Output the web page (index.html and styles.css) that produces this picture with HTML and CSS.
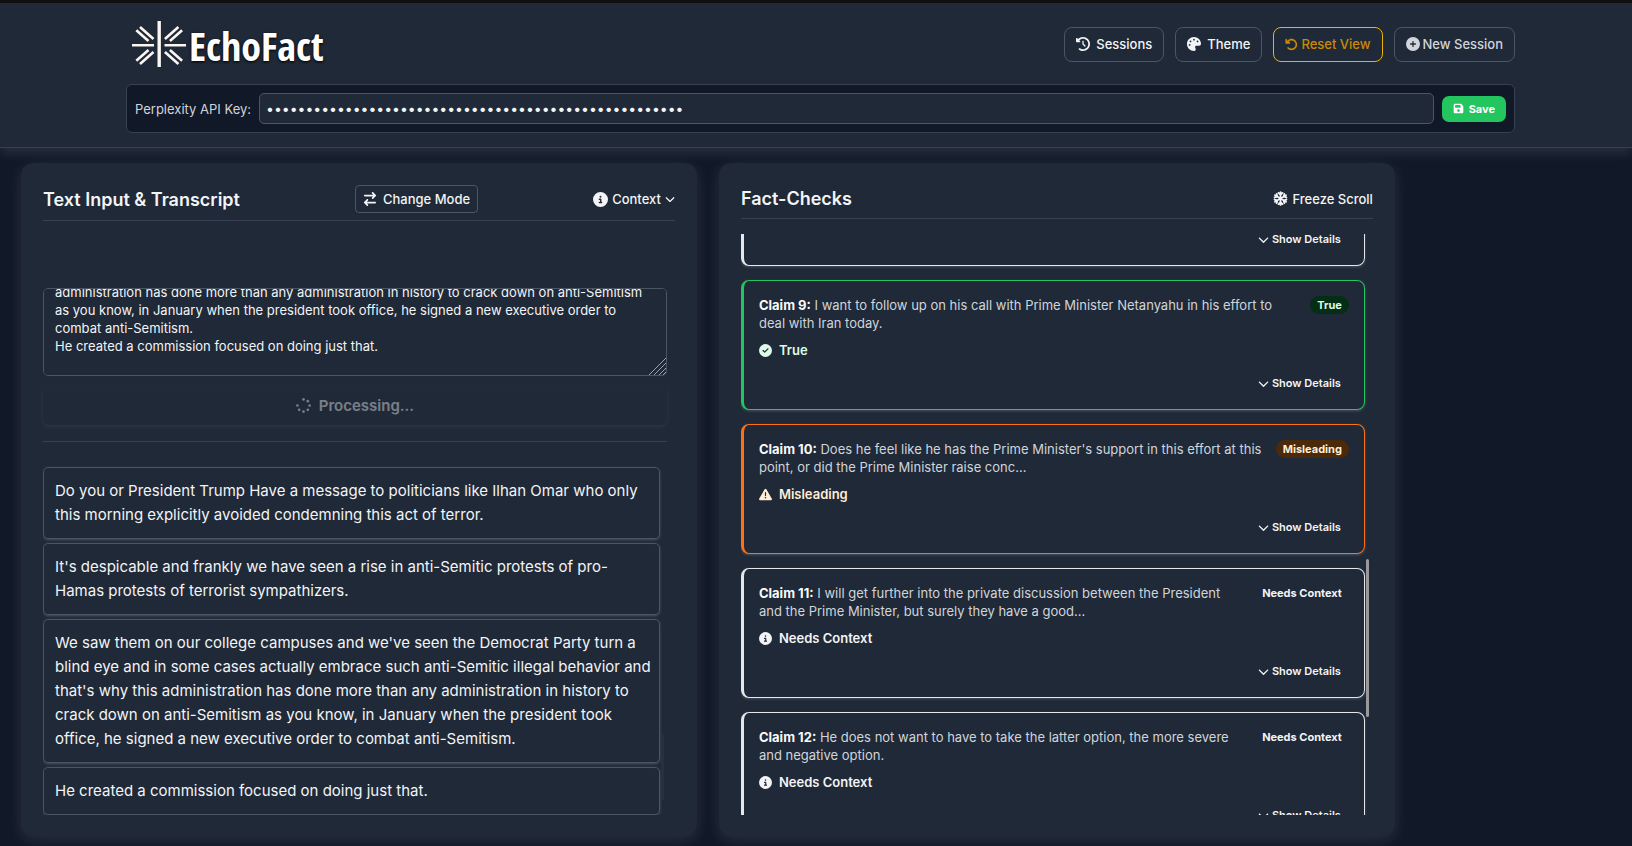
FILE: index.html
```
<!DOCTYPE html>
<html lang="en">
<head>
  <meta charset="UTF-8">
  <meta name="viewport" content="width=device-width, initial-scale=1.0">
  <title>EchoFact</title>
  <link rel="stylesheet" href="styles.css">
</head>
<body>
  <!-- Icon set -->
  <svg class="sprite" aria-hidden="true">
    <symbol id="i-history" viewBox="0 0 512 512"><path d="M75 75L41 41C25.9 25.9 0 36.6 0 57.9V168c0 13.3 10.7 24 24 24H134.1c21.4 0 32.1-25.9 17-41l-30.8-30.8C155 85.5 203 64 256 64c106 0 192 86 192 192s-86 192-192 192c-40.8 0-78.6-12.7-109.7-34.4c-14.5-10.1-34.4-6.6-44.6 7.9s-6.6 34.4 7.9 44.6C151.2 495 201.7 512 256 512c141.4 0 256-114.6 256-256S397.4 0 256 0C185.3 0 121.3 28.7 75 75zm181 53c-13.3 0-24 10.7-24 24V256c0 6.4 2.5 12.5 7 17l72 72c9.4 9.4 24.6 9.4 33.9 0s9.4-24.6 0-33.9l-65-65V152c0-13.3-10.7-24-24-24z"/></symbol>
    <symbol id="i-palette" viewBox="0 0 512 512"><path d="M512 256c0 .9 0 1.8 0 2.7c-.4 36.5-33.6 61.3-70.1 61.3H344c-26.5 0-48 21.5-48 48c0 3.4 .4 6.7 1 9.9c2.1 10.2 6.5 20 10.8 29.9c6.1 13.8 12.1 27.5 12.1 42c0 31.8-21.6 60.7-53.4 62c-3.5 .1-7 .2-10.6 .2C114.6 512 0 397.4 0 256S114.6 0 256 0S512 114.6 512 256zM128 288a32 32 0 1 0 -64 0 32 32 0 1 0 64 0zm0-96a32 32 0 1 0 0-64 32 32 0 1 0 0 64zM288 96a32 32 0 1 0 -64 0 32 32 0 1 0 64 0zm96 96a32 32 0 1 0 0-64 32 32 0 1 0 0 64z"/></symbol>
    <symbol id="i-undo" viewBox="0 0 512 512"><path d="M125.7 160H176c17.7 0 32 14.3 32 32s-14.3 32-32 32H48c-17.7 0-32-14.3-32-32V64c0-17.7 14.3-32 32-32s32 14.3 32 32v51.2L97.6 97.6c87.5-87.5 229.3-87.5 316.8 0s87.5 229.3 0 316.8s-229.3 87.5-316.8 0c-12.5-12.5-12.5-32.8 0-45.3s32.8-12.5 45.3 0c62.5 62.5 163.8 62.5 226.3 0s62.5-163.8 0-226.3s-163.8-62.5-226.3 0L125.7 160z"/></symbol>
    <symbol id="i-plus" viewBox="0 0 512 512"><path d="M256 512A256 256 0 1 0 256 0a256 256 0 1 0 0 512zM232 344V280H168c-13.3 0-24-10.7-24-24s10.7-24 24-24h64V168c0-13.3 10.7-24 24-24s24 10.7 24 24v64h64c13.3 0 24 10.7 24 24s-10.7 24-24 24H280v64c0 13.3-10.7 24-24 24s-24-10.7-24-24z"/></symbol>
    <symbol id="i-save" viewBox="0 0 448 512"><path d="M64 32C28.7 32 0 60.7 0 96V416c0 35.3 28.7 64 64 64H384c35.3 0 64-28.7 64-64V173.3c0-17-6.7-33.3-18.7-45.3L352 50.7C340 38.7 323.7 32 306.7 32H64zm0 96c0-17.7 14.3-32 32-32H288c17.7 0 32 14.3 32 32v64c0 17.7-14.3 32-32 32H96c-17.7 0-32-14.3-32-32V128zM224 288a64 64 0 1 1 0 128 64 64 0 1 1 0-128z"/></symbol>
    <symbol id="i-swap" viewBox="0 0 448 512"><path d="M438.6 150.6c12.5-12.5 12.5-32.8 0-45.3l-96-96c-12.5-12.5-32.8-12.5-45.3 0s-12.5 32.8 0 45.3L338.7 96 32 96C14.3 96 0 110.3 0 128s14.3 32 32 32l306.7 0-41.4 41.4c-12.5 12.5-12.5 32.8 0 45.3s32.8 12.5 45.3 0l96-96zm-333.3 352c12.5 12.5 32.8 12.5 45.3 0s12.5-32.8 0-45.3L109.3 416 416 416c17.7 0 32-14.3 32-32s-14.3-32-32-32l-306.7 0 41.4-41.4c12.5-12.5 12.5-32.8 0-45.3s-32.8-12.5-45.3 0l-96 96c-12.5 12.5-12.5 32.8 0 45.3l96 96z"/></symbol>
    <symbol id="i-info" viewBox="0 0 512 512"><path d="M256 512A256 256 0 1 0 256 0a256 256 0 1 0 0 512zM216 336h24V272H216c-13.3 0-24-10.7-24-24s10.7-24 24-24h48c13.3 0 24 10.7 24 24v88h8c13.3 0 24 10.7 24 24s-10.7 24-24 24H216c-13.3 0-24-10.7-24-24s10.7-24 24-24zm40-208a32 32 0 1 1 0 64 32 32 0 1 1 0-64z"/></symbol>
    <symbol id="i-down" viewBox="0 0 512 512"><path d="M233.4 406.6c12.5 12.5 32.8 12.5 45.3 0l192-192c12.5-12.5 12.5-32.8 0-45.3s-32.8-12.5-45.3 0L256 338.7 86.6 169.4c-12.5-12.5-32.8-12.5-45.3 0s-12.5 32.8 0 45.3l192 192z"/></symbol>
    <symbol id="i-check" viewBox="0 0 512 512"><path d="M256 512A256 256 0 1 0 256 0a256 256 0 1 0 0 512zM369 209L241 337c-9.4 9.4-24.6 9.4-33.9 0l-64-64c-9.4-9.4-9.4-24.6 0-33.9s24.6-9.4 33.9 0l47 47L335 175c9.4-9.4 24.6-9.4 33.9 0s9.4 24.6 0 33.9z"/></symbol>
    <symbol id="i-warning" viewBox="0 0 512 512"><path d="M256 32c14.2 0 27.3 7.5 34.5 19.8l216 368c7.3 12.4 7.3 27.7 .2 40.1S486.3 480 472 480H40c-14.3 0-27.6-7.7-34.7-20.1s-7-27.8 .2-40.1l216-368C228.7 39.5 241.8 32 256 32zm0 128c-13.3 0-24 10.7-24 24V296c0 13.3 10.7 24 24 24s24-10.7 24-24V184c0-13.3-10.7-24-24-24zm32 224a32 32 0 1 0 -64 0 32 32 0 1 0 64 0z"/></symbol>
    <symbol id="i-spinner" viewBox="0 0 512 512"><circle cx="256" cy="48" r="46"/><circle cx="403" cy="109" r="46"/><circle cx="464" cy="256" r="46"/><circle cx="403" cy="403" r="46"/><circle cx="256" cy="464" r="46"/><circle cx="109" cy="403" r="46"/><circle cx="48" cy="256" r="46"/></symbol>
    <symbol id="i-snow" viewBox="0 0 16 16"><g fill="none" stroke="currentColor" stroke-width="2" stroke-linecap="round" stroke-linejoin="round"><path id="arm" d="M8 8V1.200M5.800 2L8 4l2.200-2"/><use href="#arm" transform="rotate(60 8 8)"/><use href="#arm" transform="rotate(120 8 8)"/><use href="#arm" transform="rotate(180 8 8)"/><use href="#arm" transform="rotate(240 8 8)"/><use href="#arm" transform="rotate(300 8 8)"/></g></symbol>
  </svg>

  <header class="topbar">
    <div class="topbar-row">
      <a href="#" class="brand" aria-label="EchoFact">
        <svg class="brand-mark" viewBox="0 0 54 46">
          <path d="M27.200 0v46" stroke-width="3.400"/>
          <path d="M0 24.300h22M32.500 24.300h21.500"/>
          <path d="M4.300 9.200L16.500 20M8 6L21.500 18"/>
          <path d="M50.100 9.200L37.900 20M46.400 6L32.900 18"/>
          <path d="M4.300 39.800L16.500 29M8 43L21.500 31"/>
          <path d="M50.100 39.800L37.900 29M46.400 43L32.900 31"/>
        </svg>
        <span class="brand-name">EchoFact</span>
      </a>
      <nav class="actions">
        <button class="btn"><svg class="icon"><use href="#i-history"/></svg>Sessions</button>
        <button class="btn"><svg class="icon"><use href="#i-palette"/></svg>Theme</button>
        <button class="btn tight reset"><svg class="icon"><use href="#i-undo"/></svg>Reset View</button>
        <button class="btn tight muted"><svg class="icon"><use href="#i-plus"/></svg>New Session</button>
      </nav>
    </div>
    <form class="api">
      <label for="api-key">Perplexity API Key:</label>
      <input id="api-key" type="password" autocomplete="off" value="12345678901234567890123456789012345678901234567890123">
      <button type="button" class="save"><svg class="icon"><use href="#i-save"/></svg>Save</button>
    </form>
  </header>

  <main>
    <section class="panel">
      <div class="panel-head">
        <h2>Text Input &amp; Transcript</h2>
        <button class="mode"><svg class="icon"><use href="#i-swap"/></svg>Change Mode</button>
        <button class="link"><svg class="icon big"><use href="#i-info"/></svg>Context<svg class="icon chev"><use href="#i-down"/></svg></button>
      </div>
      <div class="input-area">
        <div class="textbox">
          <textarea id="text-input" aria-label="Text input">Do you or President Trump Have a message to politicians like Ilhan Omar who only this morning explicitly avoided condemning this act of terror.
It's despicable and frankly we have seen a rise in anti-Semitic protests of pro-Hamas protests of terrorist sympathizers.
We saw them on our college campuses and we've seen the Democrat Party turn a blind eye and in some cases actually embrace such anti-Semitic illegal behavior and that's why this administration has done more than any administration in history to crack down on anti-Semitism as you know, in January when the president took office, he signed a new executive order to combat anti-Semitism.
He created a commission focused on doing just that.</textarea>
          <svg class="grip" viewBox="0 0 18 18"><path d="M1 18L18 1M6 18L18 6M11 18l7-7M15 18l3-3"/></svg>
        </div>
        <button class="process" disabled><svg class="icon"><use href="#i-spinner"/></svg>Processing...</button>
      </div>
      <div class="scroller">
        <div class="transcript">
          <p>Do you or President Trump Have a message to politicians like Ilhan Omar who only this morning explicitly avoided condemning this act of terror.</p>
          <p>It's despicable and frankly we have seen a rise in anti-Semitic protests of pro-Hamas protests of terrorist sympathizers.</p>
          <p>We saw them on our college campuses and we've seen the Democrat Party turn a blind eye and in some cases actually embrace such anti-Semitic illegal behavior and that's why this administration has done more than any administration in history to crack down on anti-Semitism as you know, in January when the president took office, he signed a new executive order to combat anti-Semitism.</p>
          <p>He created a commission focused on doing just that.</p>
        </div>
        <span class="thumb faint"></span>
      </div>
    </section>

    <section class="panel">
      <div class="panel-head low">
        <h2>Fact-Checks</h2>
        <button class="link"><svg class="icon big"><use href="#i-snow"/></svg>Freeze Scroll</button>
      </div>
      <div class="scroller checks">
        <div class="claims" id="claims">
          <article class="claim context">
            <button class="details"><svg class="icon"><use href="#i-down"/></svg>Show Details</button>
          </article>
          <article class="claim true">
            <div class="claim-top">
              <p><strong>Claim 9:</strong> I want to follow up on his call with Prime Minister Netanyahu in his effort to deal with Iran today.</p>
              <span class="badge">True</span>
            </div>
            <div class="verdict"><svg class="icon"><use href="#i-check"/></svg>True</div>
            <button class="details"><svg class="icon"><use href="#i-down"/></svg>Show Details</button>
          </article>
          <article class="claim misleading">
            <div class="claim-top">
              <p><strong>Claim 10:</strong> Does he feel like he has the Prime Minister's support in this effort at this point, or did the Prime Minister raise conc...</p>
              <span class="badge">Misleading</span>
            </div>
            <div class="verdict"><svg class="icon"><use href="#i-warning"/></svg>Misleading</div>
            <button class="details"><svg class="icon"><use href="#i-down"/></svg>Show Details</button>
          </article>
          <article class="claim context">
            <div class="claim-top">
              <p><strong>Claim 11:</strong> I will get further into the private discussion between the President and the Prime Minister, but surely they have a good...</p>
              <span class="badge">Needs Context</span>
            </div>
            <div class="verdict"><svg class="icon"><use href="#i-info"/></svg>Needs Context</div>
            <button class="details"><svg class="icon"><use href="#i-down"/></svg>Show Details</button>
          </article>
          <article class="claim context">
            <div class="claim-top">
              <p><strong>Claim 12:</strong> He does not want to have to take the latter option, the more severe and negative option.</p>
              <span class="badge">Needs Context</span>
            </div>
            <div class="verdict"><svg class="icon"><use href="#i-info"/></svg>Needs Context</div>
            <button class="details"><svg class="icon"><use href="#i-down"/></svg>Show Details</button>
          </article>
        </div>
        <span class="thumb"></span>
      </div>
    </section>
  </main>

<script>
  const box = document.getElementById('text-input');
  box.scrollTop = box.scrollHeight;
  document.getElementById('claims').scrollTop = 98;
</script>
</body>
</html>
```
FILE: styles.css
```
* { margin:0; padding:0; box-sizing:border-box; }
body { height:100vh; display:flex; flex-direction:column; overflow:hidden; font-family:'Inter', sans-serif; font-size:14px; background:#111827; color:#f3f4f6; }
button, input, textarea { font-family:inherit; color:inherit; }
button { background:transparent; border:none; cursor:pointer; display:inline-flex; align-items:center; justify-content:center; white-space:nowrap; }
.sprite { display:none; }
.icon { width:14px; height:14px; fill:currentColor; flex:none; }
.icon.big { width:15px; height:15px; }

/* Top bar */
.topbar { background:#1f2937; border-top:3px solid #0f0f0f; border-bottom:1px solid #374151; padding:14px 117px 14px 126px; box-shadow:0 4px 12px rgba(255,255,255,0.12); }
.topbar-row { display:flex; justify-content:space-between; align-items:center; height:54px; margin-bottom:13px; }
.brand { display:flex; align-items:center; gap:3px; padding-left:6px; color:#fff; text-decoration:none; }
.brand-mark { width:54px; height:46px; fill:none; stroke:#fbf6f1; stroke-width:2.6; }
.brand-name { padding-top:3px; font-family:'Open Sans Condensed', 'Open Sans', sans-serif; font-size:40px; font-weight:700; line-height:46px; text-shadow:0 1px 3px #000; }
.actions { display:flex; gap:11px; }
.btn { height:35px; padding:0 11px; gap:6px; border:1px solid #4b5563; border-radius:8px; font-size:13px; font-weight:500; }
.btn.tight { gap:3px; }
.btn.reset { border-color:#eab308; color:#ca8a04; }
.btn.reset .icon { width:13px; height:13px; }
.btn.muted { color:#d1d5db; }
.api { display:flex; align-items:center; gap:8px; padding:8px; background:#111827; border:1px solid #374151; border-radius:6px; }
.api label { color:#d1d5db; font-size:13px; }
.api input { flex:1; min-width:0; height:31px; padding:0 6px; background:#1f2937; border:1px solid #4b5563; border-radius:5px; font-size:14px; }
.save { height:26px; padding:0 11px; gap:5px; background:#22c55e; color:#fff; border-radius:7px; font-size:11px; font-weight:700; }
.save .icon { width:11px; height:11px; }

/* Panels */
main { flex:1; min-height:0; display:grid; grid-template-columns:7fr 7fr 2fr; grid-template-rows:minmax(0,1fr); gap:22px; padding:15px 22px 10px 21px; }
.panel { display:flex; flex-direction:column; min-width:0; padding:22px 22px 21px; background:#1f2937; border-radius:12px; box-shadow:0 4px 15px rgba(255,255,255,0.1); }
.panel-head { display:flex; justify-content:space-between; align-items:center; padding-bottom:7px; border-bottom:1px solid #374151; }
.panel-head.low { padding:1px 0 7px; }
h2 { font-size:18px; font-weight:600; line-height:24px; padding-top:1px; }
.mode { height:28px; padding:0 7px; gap:6px; border:1px solid #4b5563; border-radius:4px; font-size:13px; font-weight:500; }
.link { gap:4px; font-size:13px; font-weight:500; }
.link .chev { width:10px; height:10px; }

.input-area { margin:67px 8px 0 0; padding-bottom:16px; border-bottom:1px solid #374151; }
.textbox { position:relative; }
textarea { display:block; width:100%; height:88px; padding:8px 11px 20px; background:#1f2937; border:1px solid #4b5563; border-radius:5px; font-size:13px; line-height:18px; resize:none; overflow:auto; scrollbar-width:none; }
.grip { position:absolute; right:1px; bottom:1px; width:18px; height:18px; fill:none; stroke:#9ca3af; stroke-width:1; }
.process { width:100%; height:40px; margin-top:9px; gap:8px; border-radius:6px; color:#e5e7eb; opacity:0.45; font-size:15px; font-weight:600; box-shadow:0 2px 4px rgba(255,255,255,0.15); cursor:default; }
.process .icon { width:15px; height:15px; }

.scroller { position:relative; flex:1; min-height:0; }
.thumb { position:absolute; width:3px; height:158px; top:325px; right:4px; border-radius:2px; background:#999; }
.thumb.faint { top:292px; right:11px; height:66px; background:#263040; }
.transcript { height:100%; overflow:auto; scrollbar-width:none; padding:25px 15px 0 0; }
.transcript p { margin-bottom:4px; padding:11px 6px 11px 11px; border:1px solid #4b5563; border-radius:5px; font-size:15px; line-height:24px; box-shadow:0 1px 3px rgba(255,255,255,0.2); }
.transcript p:last-child { margin-bottom:0; }

/* Fact checks */
.checks { margin-top:15px; }
.claims { height:100%; overflow:auto; scrollbar-width:none; padding-right:8px; }
.claim { height:130px; margin-bottom:14px; padding:15px; display:flex; flex-direction:column; border:1px solid #e5e7eb; border-left-width:3px; border-radius:8px; box-shadow:0 1px 3px rgba(255,255,255,0.2); }
.claim-top { display:flex; justify-content:space-between; align-items:flex-start; gap:14px; height:36px; }
.claim p { font-size:13px; line-height:18px; color:#d1d5db; }
.claim strong { color:#f9fafb; }
.badge { flex:none; padding:0 7px; border-radius:9px; font-size:11px; line-height:18px; font-weight:700; }
.verdict { display:flex; align-items:center; gap:7px; margin-top:9px; font-size:13px; line-height:18px; font-weight:600; }
.verdict .icon { width:13px; height:13px; }
.details { margin-top:auto; align-self:flex-end; height:22px; padding:0 8px; gap:3px; font-size:11px; font-weight:600; }
.details .icon { width:11px; height:11px; }
.claim.true { border-color:#22c55e; }
.true .verdict, .true .badge { color:#dcfce7; }
.true .badge { background:#052e16; }
.claim.misleading { border-color:#f97316; }
.misleading .verdict, .misleading .badge { color:#ffedd5; }
.misleading .badge { background:#4a2a0b; }
```
